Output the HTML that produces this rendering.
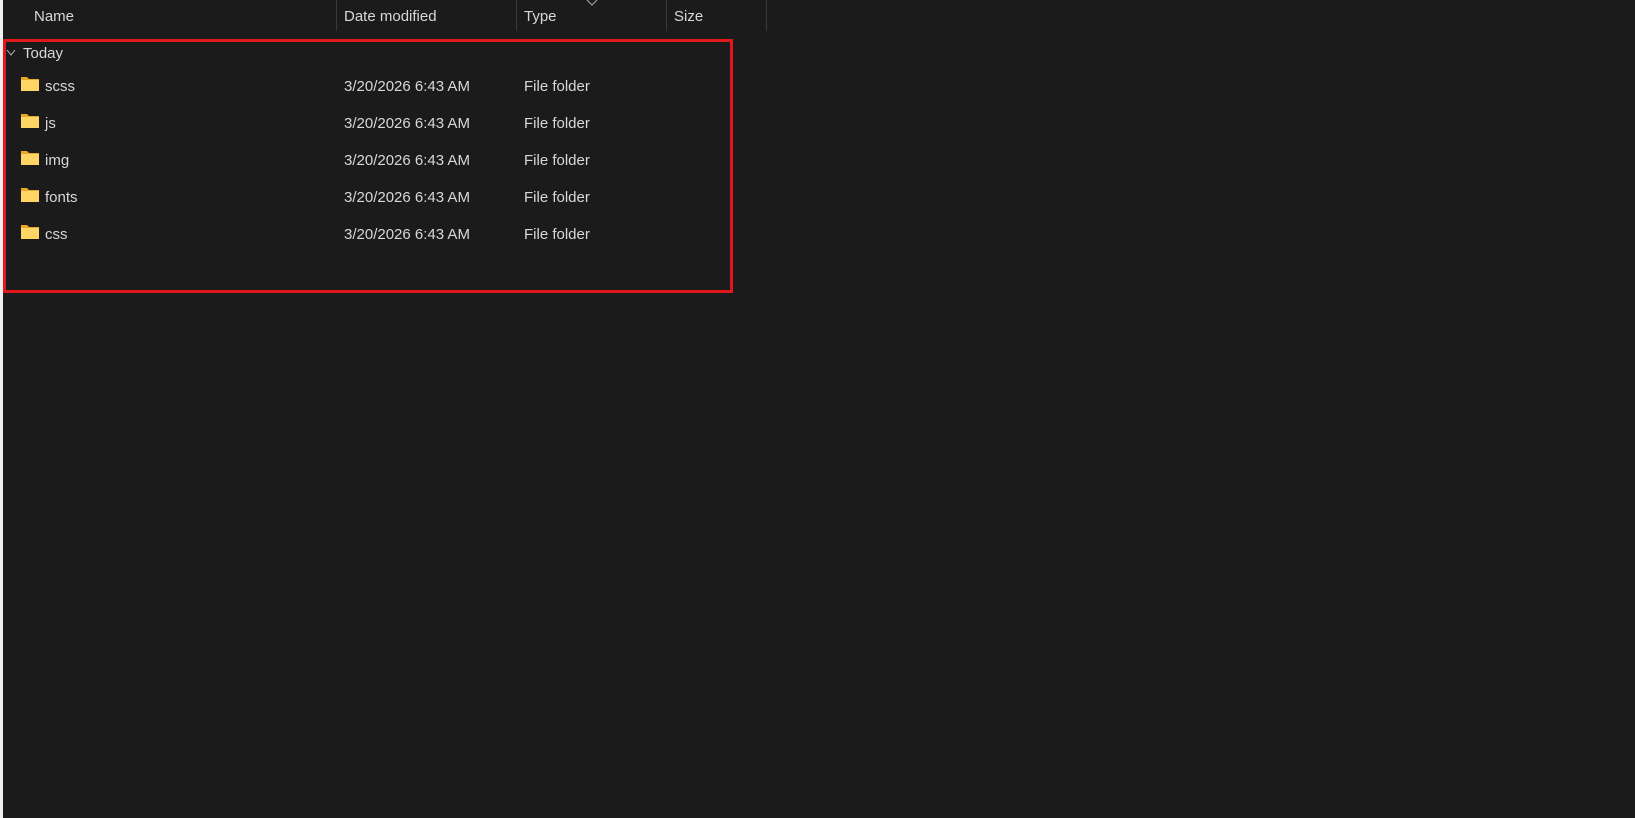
<!DOCTYPE html>
<html><head><meta charset="utf-8"><style>
html,body{margin:0;padding:0;}
body{width:1635px;height:818px;background:#1b1b1b;position:relative;overflow:hidden;font-family:"Segoe UI","Liberation Sans",sans-serif;color:#d8d8d8;font-size:15px;}
.strip{position:absolute;left:0;top:0;width:3px;height:818px;background:#f0f0f0;}
.t{position:absolute;white-space:nowrap;line-height:18px;}
.div{position:absolute;top:0;width:1px;height:31px;background:#3a3a3a;}
.box{position:absolute;left:3px;top:39px;width:724px;height:248px;border:3px solid #e0181b;}
.f{position:absolute;left:21px;width:18px;height:15px;}
</style></head><body>
<div class="strip"></div>
<div class="t" style="left:34px;top:8px">Name</div>
<div class="div" style="left:336px"></div>
<div class="t" style="left:344px;top:8px">Date modified</div>
<div class="div" style="left:516px"></div>
<div class="t" style="left:524px;top:8px">Type</div>
<svg style="position:absolute;left:586px;top:0" width="12" height="6"><path d="M1 0 L6 5 L11 0" stroke="#aaa" fill="none"/></svg>
<div class="div" style="left:666px"></div>
<div class="t" style="left:674px;top:8px">Size</div>
<div class="div" style="left:766px"></div>
<div class="box"></div>
<svg style="position:absolute;left:6px;top:49px" width="10" height="8"><path d="M1 1 L5 6 L9 1" stroke="#bbb" fill="none"/></svg>
<div class="t" style="left:23px;top:45px">Today</div>

<svg class="f" style="top:76px" viewBox="0 0 18 15"><path d="M0 1h6l2 2h10v12H0z" fill="#e8a92b"/><rect x="0" y="4" width="18" height="11" fill="#ffd666"/></svg>
<div class="t" style="left:45px;top:78px">scss</div>
<div class="t" style="left:344px;top:78px">3/20/2026 6:43 AM</div>
<div class="t" style="left:524px;top:78px">File folder</div>

<svg class="f" style="top:113px" viewBox="0 0 18 15"><path d="M0 1h6l2 2h10v12H0z" fill="#e8a92b"/><rect x="0" y="4" width="18" height="11" fill="#ffd666"/></svg>
<div class="t" style="left:45px;top:115px">js</div>
<div class="t" style="left:344px;top:115px">3/20/2026 6:43 AM</div>
<div class="t" style="left:524px;top:115px">File folder</div>

<svg class="f" style="top:150px" viewBox="0 0 18 15"><path d="M0 1h6l2 2h10v12H0z" fill="#e8a92b"/><rect x="0" y="4" width="18" height="11" fill="#ffd666"/></svg>
<div class="t" style="left:45px;top:152px">img</div>
<div class="t" style="left:344px;top:152px">3/20/2026 6:43 AM</div>
<div class="t" style="left:524px;top:152px">File folder</div>

<svg class="f" style="top:187px" viewBox="0 0 18 15"><path d="M0 1h6l2 2h10v12H0z" fill="#e8a92b"/><rect x="0" y="4" width="18" height="11" fill="#ffd666"/></svg>
<div class="t" style="left:45px;top:189px">fonts</div>
<div class="t" style="left:344px;top:189px">3/20/2026 6:43 AM</div>
<div class="t" style="left:524px;top:189px">File folder</div>

<svg class="f" style="top:224px" viewBox="0 0 18 15"><path d="M0 1h6l2 2h10v12H0z" fill="#e8a92b"/><rect x="0" y="4" width="18" height="11" fill="#ffd666"/></svg>
<div class="t" style="left:45px;top:226px">css</div>
<div class="t" style="left:344px;top:226px">3/20/2026 6:43 AM</div>
<div class="t" style="left:524px;top:226px">File folder</div>
</body></html>
